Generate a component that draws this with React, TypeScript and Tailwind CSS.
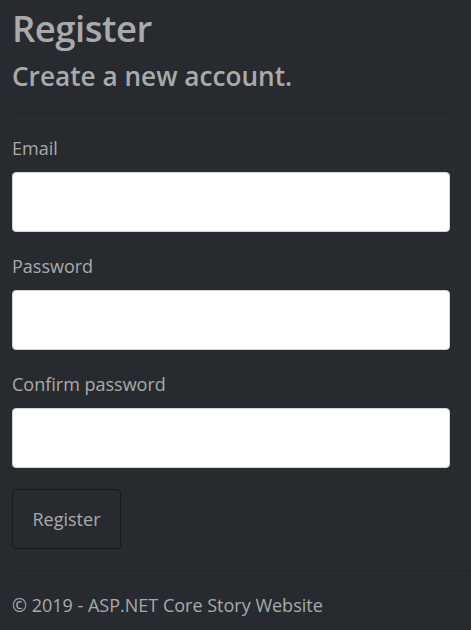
import React from "react";

const font = { fontFamily: '"Open Sans", "Noto Sans", sans-serif' };

function Field({ label }: { label: string }) {
  return (
    <div>
      <label className="block text-[18px] leading-[24px] text-[#aaaaaa]">{label}</label>
      <input
        type="text"
        className="mt-[12px] block h-[60px] w-[438px] rounded-[4px] border border-[#ced4da] bg-white px-4 outline-none"
      />
    </div>
  );
}

export default function App() {
  return (
    <div
      className="min-h-[630px] bg-[#272b30] pl-3 text-[#aaaaaa]"
      style={font}
    >
      <div className="w-[438px]">
        <h1 className="pt-[4px] text-[36.5px] font-semibold leading-[48px] tracking-[-0.5px] text-[#aaaaaa]">
          Register
        </h1>
        <h2 className="mt-[8px] text-[26.2px] font-semibold leading-[32px] text-[#aaaaaa]">
          Create a new account.
        </h2>
        <hr className="mt-[21px] border-t border-[#202327]" />
        <div className="mt-[22px] flex flex-col gap-[22px]">
          <Field label="Email" />
          <Field label="Password" />
          <Field label="Confirm password" />
        </div>
        <button className="mt-[21px] h-[60px] w-[109px] rounded-[4px] border border-[#17191c] text-[18px] text-[#aaaaaa]">
          Register
        </button>
      </div>
      <hr className="mt-[21px] border-t border-[#202327]" />
      <footer className="pt-[22px] text-[18px] leading-[24px] text-[#aaaaaa]">
        © 2019 - ASP.NET Core Story Website
      </footer>
    </div>
  );
}
